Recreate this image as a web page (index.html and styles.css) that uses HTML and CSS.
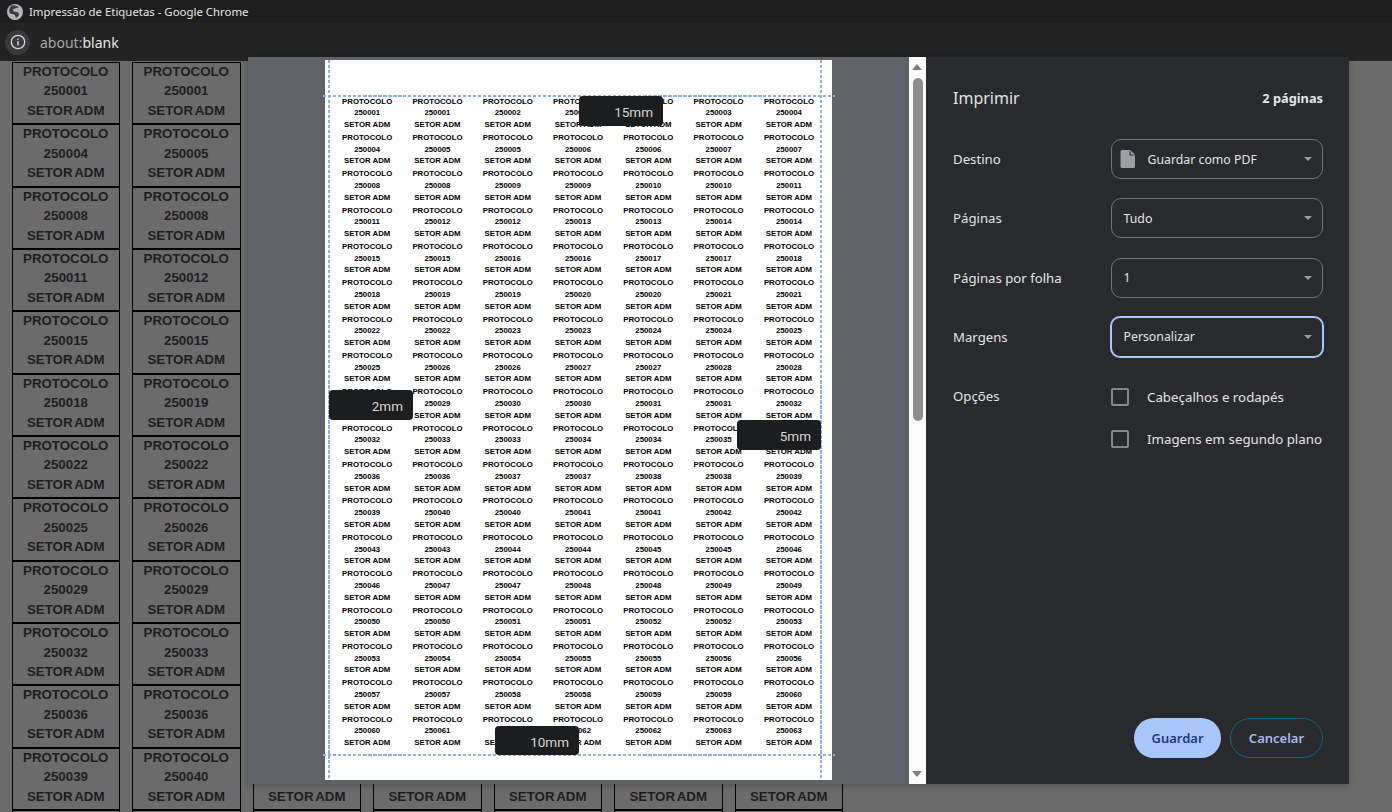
FILE: index.html
```html
<!DOCTYPE html>
<html lang="pt">

<head>
    <meta charset="UTF-8">
    <meta name="viewport" content="width=device-width, initial-scale=1.0">
    <title>Impressão de Etiquetas</title>
    <link rel="stylesheet" href="styles.css">
</head>

<body>
    <header class="title-bar">
        <svg class="globe" viewBox="0 0 16 16" width="16" height="16">
            <circle cx="8" cy="8" r="8" fill="#b4b6b9"/>
            <path d="M5 1.2c2.6 0 5 .6 6.6 1.6-.6 1.4-2.2 1.6-3.6 1.6-1.2 0-2.2.8-2 2 .2 1 1.4 1.2 2.6 1.4 2 .3 3.6 1 3.4 2.8-.2 1.6-1.6 2.6-3 3.4-.8-1.2-.4-2.4-1.4-3.2-1.2-.9-3.6-.6-4.8-1.8C1.3 6.400 2.800 3 5 1.200z" fill="#3c3e42"/>
        </svg>
        <span>Impressão de Etiquetas - Google Chrome</span>
    </header>

    <div class="address-bar">
        <span class="info-button">
            <svg viewBox="0 0 16 16" width="16" height="16">
                <circle cx="8" cy="8" r="6.700" fill="none" stroke="#d5d7da" stroke-width="1.300"/>
                <rect x="7.300" y="7" width="1.400" height="4.500" fill="#d5d7da"/>
                <rect x="7.300" y="4.500" width="1.400" height="1.400" fill="#d5d7da"/>
            </svg>
        </span>
        <span class="url"><span class="url-scheme">about:</span>blank</span>
    </div>

    <main id="sheet" class="sheet"></main>

    <section class="print-dialog">
        <div class="preview">
            <div class="paper">
                <div id="paper-labels" class="paper-labels"></div>

                <i class="guide guide-top"></i>
                <i class="guide guide-bottom"></i>
                <i class="guide guide-left"></i>
                <i class="guide guide-right"></i>

                <span class="margin-tip tip-top">15mm</span>
                <span class="margin-tip tip-left">2mm</span>
                <span class="margin-tip tip-right">5mm</span>
                <span class="margin-tip tip-bottom">10mm</span>
            </div>
        </div>

        <div class="scrollbar">
            <i class="arrow arrow-up"></i>
            <i class="thumb"></i>
            <i class="arrow arrow-down"></i>
        </div>

        <aside class="sidebar">
            <div class="sidebar-head">
                <h1>Imprimir</h1>
                <strong>2 páginas</strong>
            </div>

            <div class="setting">
                <label>Destino</label>
                <div class="select">
                    <svg class="file-icon" viewBox="0 0 16 20" width="16" height="20">
                        <path d="M2 1h8l5 5.500V17.500a1.500 1.500 0 0 1-1.500 1.500h-11.500A1.500 1.500 0 0 1 .5 17.500V2.500A1.500 1.500 0 0 1 2 1z" fill="#9aa0a6"/>
                        <path d="M9.500 1.500v5h5z" fill="#292a2d"/>
                        <path d="M10.500 1.500v4h4.500z" fill="#9aa0a6"/>
                    </svg>
                    <span>Guardar como PDF</span>
                </div>
            </div>

            <div class="setting">
                <label>Páginas</label>
                <div class="select"><span>Tudo</span></div>
            </div>

            <div class="setting">
                <label>Páginas por folha</label>
                <div class="select"><span>1</span></div>
            </div>

            <div class="setting">
                <label>Margens</label>
                <div class="select select-focus"><span>Personalizar</span></div>
            </div>

            <div class="setting setting-options">
                <label>Opções</label>
                <div class="options">
                    <div class="option"><i class="checkbox"></i><span>Cabeçalhos e rodapés</span></div>
                    <div class="option"><i class="checkbox"></i><span>Imagens em segundo plano</span></div>
                </div>
            </div>

            <div class="actions">
                <button class="btn-save">Guardar</button>
                <button class="btn-cancel">Cancelar</button>
            </div>
        </aside>
    </section>

    <script src="app.js"></script>
</body>

</html>
```

FILE: styles.css
```css
*, *::before, *::after {
    box-sizing: border-box;
}

html, body {
    height: 100%;
}

body {
    margin: 0;
    overflow: hidden;
    position: relative;
    display: flex;
    flex-direction: column;
    background: #6b6b6b;
    font-family: 'Noto Sans', 'Open Sans', sans-serif;
}

.title-bar {
    flex: none;
    height: 23px;
    padding-left: 7px;
    display: flex;
    align-items: center;
    gap: 6px;
    background: #1e1e1e;
    color: #e6e6e6;
    font-size: 11.400px;
}

.address-bar {
    flex: none;
    height: 38px;
    padding-left: 5px;
    display: flex;
    align-items: center;
    gap: 10px;
    background: #232323;
    color: #e8e8e8;
    font-size: 14px;
}

.info-button {
    width: 25px;
    height: 25px;
    border-radius: 50%;
    background: #3a3a3a;
    display: flex;
    align-items: center;
    justify-content: center;
}

.url-scheme {
    color: #a9a9a9;
}

/* label sheet behind the dialog */
.sheet {
    flex: 1;
    min-height: 0;
    overflow: hidden;
    margin: 1px 0 0 11.500px;
    display: grid;
    grid-template-columns: repeat(7, 108.500px);
    grid-auto-rows: 62.350px;
    column-gap: 12px;
}

.label {
    border: 1px solid #000;
    text-align: center;
    font-family: 'Liberation Sans', Arial, sans-serif;
    font-weight: bold;
    font-size: 13.300px;
    line-height: 19.400px;
    word-spacing: -1.500px;
    color: #1e1e1e;
}

.label div:first-child {
    margin-top: -1px;
}

.label-covered {
    visibility: hidden;
}

/* dialog */
.print-dialog {
    position: absolute;
    left: 248px;
    top: 57px;
    width: 1101px;
    height: 727px;
    display: flex;
    box-shadow: 0 2px 6px rgba(0, 0, 0, 0.25);
}

.preview {
    width: 661px;
    padding-top: 3px;
    display: flex;
    justify-content: center;
    background: #5f6368;
}

.paper {
    position: relative;
    width: 507px;
    height: 720px;
    padding: 35.500px 0 0 7px;
    background: #fff;
}

.paper-labels {
    display: grid;
    grid-template-columns: repeat(7, 70.300px);
    grid-auto-rows: 36.370px;
}

.paper-label {
    text-align: center;
    font-family: 'Liberation Sans', Arial, sans-serif;
    font-weight: bold;
    font-size: 7.800px;
    line-height: 11.700px;
    color: #000;
}

.guide {
    position: absolute;
}

.guide-top, .guide-bottom {
    left: -2px;
    right: -3px;
    height: 2px;
    background: repeating-linear-gradient(90deg, #8ab0e6 0 3.500px, transparent 3.500px 5px);
}

.guide-top {
    top: 35px;
}

.guide-bottom {
    top: 694px;
}

.guide-left, .guide-right {
    top: 0;
    bottom: 0;
    width: 2px;
    background: repeating-linear-gradient(180deg, #8ab0e6 0 3.500px, transparent 3.500px 5px);
}

.guide-left {
    left: 3px;
}

.guide-right {
    left: 495px;
}

.margin-tip {
    position: absolute;
    width: 84px;
    height: 30px;
    padding-right: 10px;
    border-radius: 4px;
    background: #1c1d1f;
    color: #d6d6d6;
    font-family: 'Roboto', 'Noto Sans', sans-serif;
    font-size: 13.500px;
    line-height: 33px;
    text-align: right;
}

.tip-top {
    left: 254px;
    top: 36px;
}

.tip-left {
    left: 4px;
    top: 330px;
}

.tip-right {
    left: 412px;
    top: 360px;
}

.tip-bottom {
    left: 170px;
    top: 666px;
    height: 29px;
}

.scrollbar {
    width: 17px;
    position: relative;
    background: #fbfbfb;
}

.thumb {
    position: absolute;
    left: 4px;
    top: 21px;
    width: 10px;
    height: 343px;
    border-radius: 5px;
    background: #8f8f8f;
}

.arrow {
    position: absolute;
    left: 3px;
    width: 0;
    height: 0;
    border-left: 5.500px solid transparent;
    border-right: 5.500px solid transparent;
}

.arrow-up {
    top: 7px;
    border-bottom: 6px solid #7f7f7f;
}

.arrow-down {
    bottom: 7px;
    border-top: 6px solid #7f7f7f;
}

.sidebar {
    flex: 1;
    padding: 0 26px 26px 27px;
    display: flex;
    flex-direction: column;
    background: #292a2d;
    color: #e3e4e6;
    font-size: 13.200px;
}

.sidebar-head {
    height: 82px;
    display: flex;
    align-items: center;
    justify-content: space-between;
}

.sidebar-head h1 {
    margin: 0;
    font-size: 16px;
    font-weight: 400;
}

.sidebar-head strong {
    font-size: 12.800px;
    font-weight: 700;
}

.setting {
    display: grid;
    grid-template-columns: 158px 212px;
    align-items: center;
    height: 40px;
    margin-bottom: 19.300px;
}

.select {
    position: relative;
    height: 40px;
    padding-left: 11.500px;
    display: flex;
    align-items: center;
    gap: 12px;
    border: 1px solid #6f7277;
    border-radius: 10px;
    font-size: 12.300px;
}

.select::after {
    content: "";
    position: absolute;
    right: 10px;
    top: 17px;
    border-left: 4px solid transparent;
    border-right: 4px solid transparent;
    border-top: 4px solid #9aa0a6;
}

.file-icon {
    margin-left: -4px;
}

.select-focus {
    height: 42px;
    margin: -1px -1px 0;
    border: 2px solid #a8c7fa;
}

.setting-options {
    align-items: start;
    height: auto;
    margin: 12px 0 0;
}

.setting-options label {
    margin-top: -1px;
}

.options {
    display: flex;
    flex-direction: column;
    gap: 24px;
}

.option {
    height: 18px;
    display: flex;
    align-items: center;
    gap: 18px;
    font-size: 13.300px;
}

.checkbox {
    width: 18px;
    height: 18px;
    border: 2px solid #84878b;
    border-radius: 2px;
}

.actions {
    margin-top: auto;
    display: flex;
    justify-content: flex-end;
    gap: 9px;
}

.actions button {
    height: 40px;
    border-radius: 20px;
    font-family: inherit;
    font-size: 13px;
    font-weight: 600;
}

.btn-save {
    width: 87px;
    border: none;
    background: #a8c7fa;
    color: #1d3a78;
}

.btn-cancel {
    width: 93px;
    border: 1px solid #0d6685;
    background: transparent;
    color: #a3bde8;
}
```

FILE: app.js
```js
// each protocol number is printed twice, seven labels per row
const COLUMNS = 7;

function labelNumber(index) {
    return 250001 + Math.floor(index / 2);
}

function addLabel(target, index, className) {
    const label = document.createElement("div");
    label.className = className;
    label.innerHTML = `
        <div>PROTOCOLO</div>
        <div>${labelNumber(index)}</div>
        <div>SETOR ADM</div>
    `;
    target.appendChild(label);
}

const sheet = document.getElementById("sheet");

for (let i = 0; i < 84; i++) {
    const row = Math.floor(i / COLUMNS);
    const col = i % COLUMNS;
    // the print dialog sits over columns 3-7 until the last row
    if (col >= 2 && row < 11) {
        sheet.appendChild(document.createElement("div")).className = "label-covered";
    } else {
        addLabel(sheet, i, "label");
    }
}

// next row only shows its top border at the window edge
for (let i = 0; i < COLUMNS; i++) {
    sheet.appendChild(document.createElement("div")).className = "label";
}

const paperLabels = document.getElementById("paper-labels");

for (let i = 0; i < 126; i++) {
    addLabel(paperLabels, i, "paper-label");
}
```
